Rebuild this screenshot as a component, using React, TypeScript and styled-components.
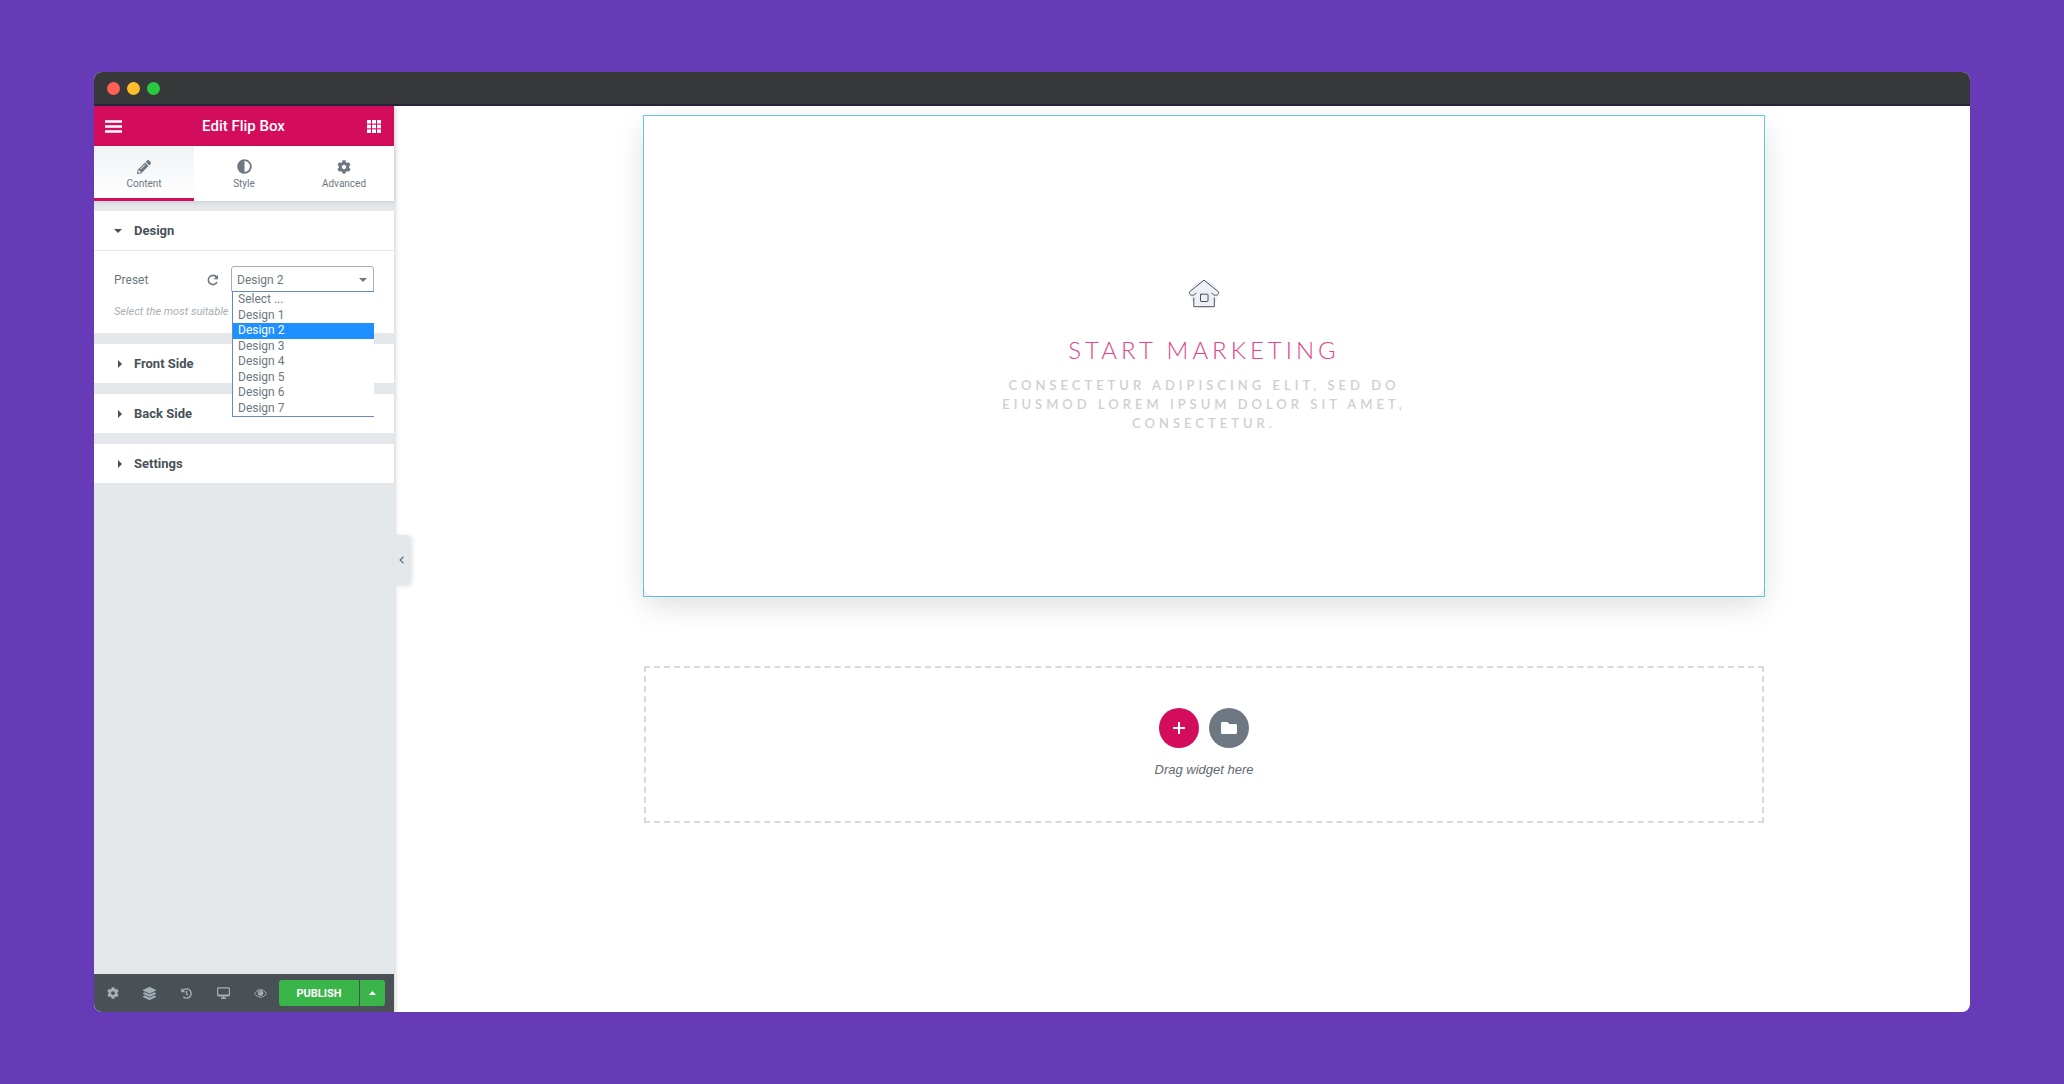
import React, { useState } from 'react';
import styled, { createGlobalStyle } from 'styled-components';
import { FaPencilAlt, FaAdjust, FaCog, FaLayerGroup, FaHistory, FaFolder } from 'react-icons/fa';

const GlobalStyle = createGlobalStyle`
  *, *::before, *::after { box-sizing: border-box; }
  body { margin: 0; background: #673ab7; font-family: Roboto, "Liberation Sans", sans-serif; }
  button, select { font-family: inherit; }
  button { border: 0; padding: 0; margin: 0; background: none; cursor: pointer; }
`;

const Page = styled.div`
  min-height: 100vh;
  padding: 72px 94px;
  display: flex;
`;

const Window = styled.div`
  flex: 1;
  display: flex;
  flex-direction: column;
  overflow: hidden;
  border-radius: 8px;
  background: #fff;
`;

const TitleBar = styled.div`
  position: relative;
  z-index: 2;
  height: 34px;
  padding: 0 13px;
  display: flex;
  align-items: center;
  gap: 7px;
  background: #37383a;
  border-bottom: 2px solid #26243a;
`;

const Light = styled.span<{ $color: string }>`
  width: 13px;
  height: 13px;
  border-radius: 50%;
  background: ${(p) => p.$color};
`;

const Workspace = styled.div`
  flex: 1;
  display: flex;
`;

const Panel = styled.aside`
  position: relative;
  z-index: 1;
  flex: 0 0 300px;
  display: flex;
  flex-direction: column;
  background: #e4e8eb;
  box-shadow: 1px 0 5px rgba(0, 0, 0, 0.2);
`;

const PanelHeader = styled.header`
  height: 40px;
  padding: 0 12px 0 11px;
  display: flex;
  align-items: center;
  justify-content: space-between;
  background: #d30c5c;
  color: #fff;
`;

const PanelTitle = styled.h1`
  margin: 0;
  font-size: 15px;
  font-weight: 500;
  line-height: 20px;
`;

const HeaderButton = styled.button`
  width: 17px;
  height: 16px;
  display: grid;
  place-items: center;
  color: #fff;
`;

const Tabs = styled.nav`
  display: flex;
  background: #fff;
  box-shadow: 0 1px 5px rgba(0, 0, 0, 0.12);
`;

const Tab = styled.button<{ $active: boolean }>`
  flex: 1;
  height: 55px;
  padding-top: 13px;
  display: flex;
  flex-direction: column;
  align-items: center;
  gap: 3px;
  color: #6d7882;
  font-size: 10px;
  line-height: 14px;
  background: ${(p) => (p.$active ? 'linear-gradient(#f1f3f5, #fff)' : '#fff')};
  border-bottom: 3px solid ${(p) => (p.$active ? '#d30c5c' : '#fff')};
`;

const TabIcon = styled.span`
  height: 15px;
  display: grid;
  place-items: center;
`;

const Sections = styled.div`
  flex: 1;
  padding-top: 10px;
  display: flex;
  flex-direction: column;
  gap: 11px;
`;

const Section = styled.section`
  background: #fff;
`;

const SectionHeader = styled.button`
  width: 100%;
  height: 39px;
  padding: 0 20px;
  display: flex;
  align-items: center;
  gap: 12px;
  color: #495157;
  font-size: 13px;
  font-weight: 700;
`;

const Caret = styled.svg`
  width: 8px;
  height: 8px;
  fill: currentColor;
`;

const SectionBody = styled.div`
  padding: 15px 20px 14px;
  border-top: 1px solid #e4e8eb;
`;

const Field = styled.div`
  display: flex;
  align-items: center;
  height: 27px;
  color: #6d7882;
  font-size: 12px;
`;

const FieldLabel = styled.label`
  flex: 1;
`;

const ResetButton = styled.button`
  width: 12px;
  height: 12px;
  margin-right: 12px;
  color: #6d7882;
`;

const Picker = styled.div`
  position: relative;
  width: 143px;
`;

const Select = styled.select`
  display: block;
  width: 100%;
  height: 27px;
  padding: 0 5px;
  appearance: none;
  border: 1px solid #a4afb7;
  border-radius: 3px;
  background: #fff;
  color: #6d7882;
  font-size: 12px;
`;

const PickerCaret = styled(Caret)`
  position: absolute;
  right: 7px;
  top: 10px;
  pointer-events: none;
`;

const Options = styled.ul`
  position: absolute;
  z-index: 2;
  top: 25px;
  left: 1px;
  right: 0;
  height: 126px;
  margin: 0;
  padding: 0;
  list-style: none;
  display: grid;
  grid-auto-rows: 1fr;
  background: #fff;
  border: solid #6489c4;
  border-width: 1px 0 1px 1px;
`;

const Option = styled.li<{ $selected: boolean }>`
  padding-left: 5px;
  line-height: 15px;
  font-size: 12px;
  color: ${(p) => (p.$selected ? '#fff' : '#6d7882')};
  background: ${(p) => (p.$selected ? '#1e90ff' : 'transparent')};
`;

const Hint = styled.p`
  margin: 11px 0 0;
  color: #a4afb7;
  font-size: 11px;
  font-style: italic;
  line-height: 15px;
`;

const PanelFooter = styled.footer`
  height: 38px;
  padding-right: 9px;
  display: flex;
  align-items: center;
  background: #495157;
`;

const Tool = styled.button`
  flex: 1;
  height: 38px;
  display: grid;
  place-items: center;
  color: #a4afb7;
`;

const PublishGroup = styled.div`
  display: flex;
  gap: 1px;
  overflow: hidden;
  border-radius: 3px;
`;

const PublishButton = styled.button<{ $width: number }>`
  width: ${(p) => p.$width}px;
  height: 26px;
  display: grid;
  place-items: center;
  background: #39b54a;
  color: #fff;
  font-size: 11px;
  font-weight: 700;
`;

const CollapseButton = styled.button`
  position: absolute;
  left: 100%;
  top: 50%;
  width: 15px;
  height: 50px;
  margin-top: -24px;
  display: grid;
  place-items: center;
  border-radius: 0 3px 3px 0;
  background: #e4e8eb;
  color: #6d7882;
  box-shadow: 3px 1px 5px rgba(0, 0, 0, 0.12);
`;

const Canvas = styled.main`
  flex: 1;
  padding: 9px 22px 0 66px;
  display: flex;
  flex-direction: column;
  align-items: center;
  gap: 69px;
`;

const FlipBox = styled.section`
  width: 100%;
  max-width: 1122px;
  border: 1px solid #6ccbea;
`;

const FlipFace = styled.div`
  min-height: 480px;
  display: flex;
  flex-direction: column;
  align-items: center;
  justify-content: center;
  border-radius: 10px;
  background: #fff;
  box-shadow: 0 10px 30px rgba(0, 0, 0, 0.13);
  text-align: center;
`;

const FlipTitle = styled.h2`
  margin: 28px 0 13px;
  color: #e0458a;
  font-family: Lato, sans-serif;
  font-size: 24px;
  font-weight: 300;
  line-height: 26px;
  letter-spacing: 4px;
  text-transform: uppercase;
`;

const FlipText = styled.p`
  max-width: 410px;
  margin: 0;
  color: #cfcfcf;
  font-family: Lato, sans-serif;
  font-size: 13px;
  font-weight: 600;
  line-height: 19px;
  letter-spacing: 4px;
  text-transform: uppercase;
`;

const DropArea = styled.section`
  width: 100%;
  max-width: 1120px;
  padding: 40px;
  display: flex;
  flex-direction: column;
  align-items: center;
  gap: 10px;
  border: 2px dashed #d5dadf;
`;

const Actions = styled.div`
  display: flex;
  gap: 10px;
`;

const RoundButton = styled.button<{ $color: string }>`
  width: 40px;
  height: 40px;
  display: grid;
  place-items: center;
  border-radius: 50%;
  background: ${(p) => p.$color};
  color: #fff;
`;

const DropHint = styled.p`
  margin: 0;
  color: #5f6972;
  font-family: "Liberation Sans", Arial, sans-serif;
  font-size: 13px;
  font-style: italic;
  line-height: 23px;
`;

const DownCaret = () => (
  <Caret viewBox="0 0 8 8"><path d="M0 2h8L4 6z" /></Caret>
);
const RightCaret = () => (
  <Caret viewBox="0 0 8 8"><path d="M4 0v8L8 4z" /></Caret>
);

const options = ['Select ...', 'Design 1', 'Design 2', 'Design 3', 'Design 4', 'Design 5', 'Design 6', 'Design 7'];

const tabs = [
  { label: 'Content', icon: <FaPencilAlt size={14} /> },
  { label: 'Style', icon: <FaAdjust size={15} /> },
  { label: 'Advanced', icon: <FaCog size={14} /> },
];

export default function App() {
  const [tab, setTab] = useState('Content');
  const [preset, setPreset] = useState('Design 2');

  return (
    <Page>
      <GlobalStyle />
      <Window>
        <TitleBar>
          <Light $color="#ff5f57" />
          <Light $color="#ffbd2e" />
          <Light $color="#28ca42" />
        </TitleBar>
        <Workspace>
          <Panel>
            <PanelHeader>
              <HeaderButton aria-label="Menu">
                <svg width="17" height="13" viewBox="0 0 17 13" stroke="currentColor" strokeWidth="2.4">
                  <path d="M0 1.500h17M0 6.500h17M0 11.500h17" />
                </svg>
              </HeaderButton>
              <PanelTitle>Edit Flip Box</PanelTitle>
              <HeaderButton aria-label="Widgets">
                <svg width="14" height="13" viewBox="0 0 14 13" fill="currentColor">
                  {[0, 5, 10].map((x) => [0, 5, 10].map((y) => (
                    <rect key={`${x}-${y}`} x={x} y={y * 0.94} width="4" height="3.6" />
                  )))}
                </svg>
              </HeaderButton>
            </PanelHeader>
            <Tabs>
              {tabs.map(({ label, icon }) => (
                <Tab key={label} $active={tab === label} onClick={() => setTab(label)}>
                  <TabIcon>{icon}</TabIcon>
                  {label}
                </Tab>
              ))}
            </Tabs>
            <Sections>
              <Section>
                <SectionHeader><DownCaret />Design</SectionHeader>
                <SectionBody>
                  <Field>
                    <FieldLabel htmlFor="preset">Preset</FieldLabel>
                    <ResetButton aria-label="Reset">
                      <svg width="12" height="12" viewBox="0 0 12 12" fill="none" stroke="currentColor" strokeWidth="1.6">
                        <path d="M9.6 3.2A4.6 4.6 0 1 0 10 8.2" />
                        <path d="M11 .8v4.4H6.6z" fill="currentColor" stroke="none" />
                      </svg>
                    </ResetButton>
                    <Picker>
                      <Select id="preset" value={preset} onChange={(e) => setPreset(e.target.value)}>
                        {options.map((o) => <option key={o}>{o}</option>)}
                      </Select>
                      <PickerCaret viewBox="0 0 8 8"><path d="M0 2h8L4 6z" /></PickerCaret>
                      <Options role="listbox" aria-label="Preset options">
                        {options.map((o) => (
                          <Option key={o} role="option" aria-selected={o === preset} $selected={o === preset} onClick={() => setPreset(o)}>
                            {o}
                          </Option>
                        ))}
                      </Options>
                    </Picker>
                  </Field>
                  <Hint>Select the most suitable</Hint>
                </SectionBody>
              </Section>
              {['Front Side', 'Back Side', 'Settings'].map((name) => (
                <Section key={name}>
                  <SectionHeader><RightCaret />{name}</SectionHeader>
                </Section>
              ))}
            </Sections>
            <PanelFooter>
              <Tool aria-label="Settings"><FaCog size={12} /></Tool>
              <Tool aria-label="Navigator"><FaLayerGroup size={13} /></Tool>
              <Tool aria-label="History"><FaHistory size={11} /></Tool>
              <Tool aria-label="Responsive mode">
                <svg width="13" height="12" viewBox="0 0 13 12" fill="none" stroke="currentColor">
                  <rect x=".6" y=".8" width="11.8" height="8" rx="1" strokeWidth="1.2" />
                  <path d="M1 8.3h11" strokeWidth="1.6" />
                  <path d="M4 11.2h5M6.5 9v2" strokeWidth="1.5" />
                </svg>
              </Tool>
              <Tool aria-label="Preview changes">
                <svg width="13" height="9" viewBox="0 0 13 9" fill="none" stroke="currentColor">
                  <path d="M.6 4.5C3.4-.6 9.6-.6 12.4 4.5 9.6 9.4 3.4 9.4.6 4.5z" />
                  <circle cx="6.5" cy="4" r="2.8" fill="currentColor" stroke="none" />
                  <path d="M5.1 3.8A1.4 1.4 0 0 1 6.5 2.5" stroke="#495157" strokeWidth=".7" />
                </svg>
              </Tool>
              <PublishGroup>
                <PublishButton $width={80}>PUBLISH</PublishButton>
                <PublishButton $width={25} aria-label="Save options">
                  <svg width="7" height="4" viewBox="0 0 7 4" fill="currentColor"><path d="M0 4h7L3.5 0z" /></svg>
                </PublishButton>
              </PublishGroup>
            </PanelFooter>
            <CollapseButton aria-label="Hide panel">
              <svg width="5" height="8" viewBox="0 0 5 8" fill="none" stroke="currentColor" strokeWidth="1.4">
                <path d="M4.4.8 1.2 4l3.2 3.2" />
              </svg>
            </CollapseButton>
          </Panel>
          <Canvas>
            <FlipBox>
              <FlipFace>
                <svg width="32" height="30" viewBox="0 0 32 30" fill="none" stroke="#4b5158" strokeWidth="1" strokeLinecap="round" strokeLinejoin="round">
                  <circle cx="16" cy="15" r="14" fill="#edf1f7" stroke="none" />
                  <path d="M8.2 14.2 6.2 15.8C4 17.2.4 15.5 1.500 12.8L16 1.2l14.500 11.6c1.1 2.7-2.5 4.4-4.700 3l-2-1.600" />
                  <path d="M5.800 19v8.700h20.500V19" />
                  <rect x="12.500" y="15.200" width="7.500" height="7.300" rx=".6" />
                </svg>
                <FlipTitle>Start Marketing</FlipTitle>
                <FlipText>Consectetur adipiscing elit, sed do eiusmod lorem ipsum dolor sit amet, consectetur.</FlipText>
              </FlipFace>
            </FlipBox>
            <DropArea>
              <Actions>
                <RoundButton $color="#d30c5c" aria-label="Add new section">
                  <svg width="12" height="12" viewBox="0 0 12 12" stroke="currentColor" strokeWidth="2"><path d="M6 0v12M0 6h12" /></svg>
                </RoundButton>
                <RoundButton $color="#6d7882" aria-label="Add template"><FaFolder size={16} /></RoundButton>
              </Actions>
              <DropHint>Drag widget here</DropHint>
            </DropArea>
          </Canvas>
        </Workspace>
      </Window>
    </Page>
  );
}
